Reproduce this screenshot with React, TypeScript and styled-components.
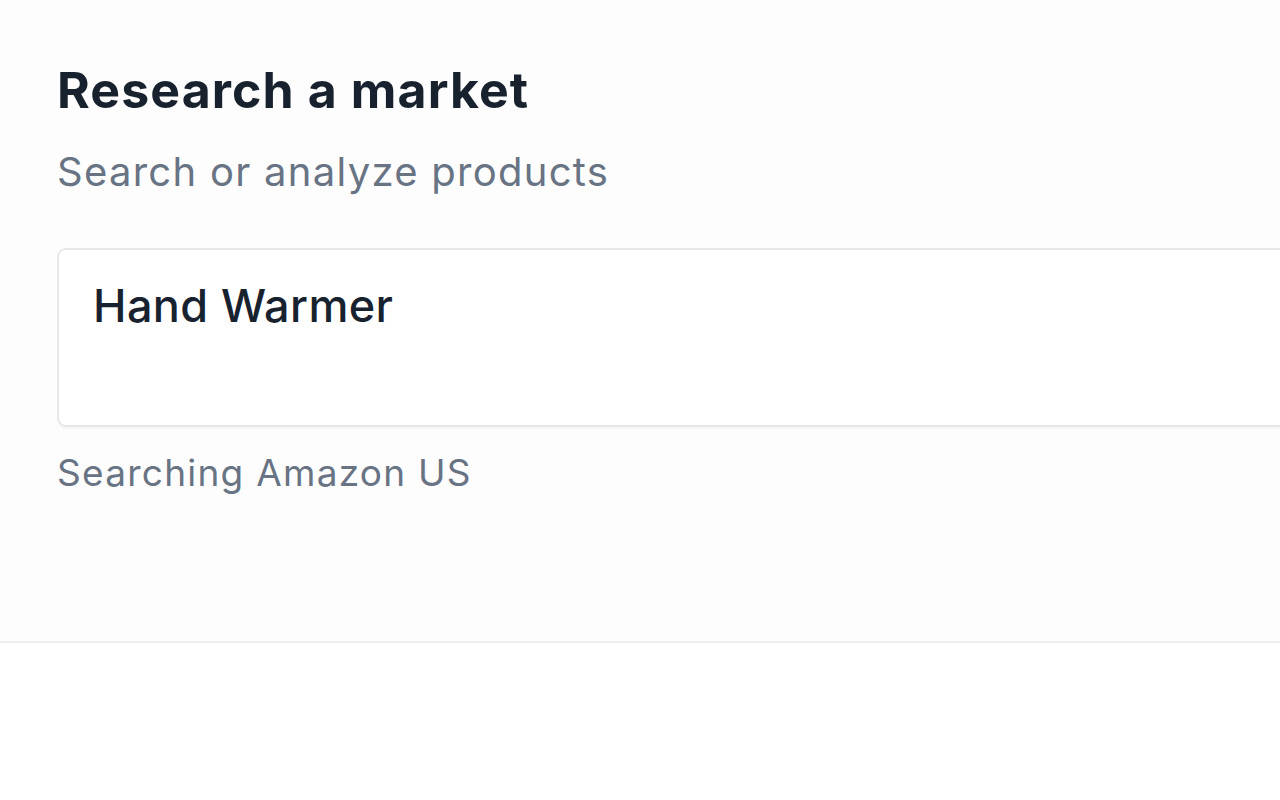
import styled, { createGlobalStyle } from "styled-components";

const GlobalStyle = createGlobalStyle`
  html, body {
    margin: 0;
    padding: 0;
    background: #ffffff;
  }
  body {
    font-family: Inter, "Noto Sans", "Liberation Sans", sans-serif;
    -webkit-font-smoothing: antialiased;
  }
`;

const Page = styled("div")`
  width: 1280px;
  height: 800px;
  overflow: hidden;
  display: flex;
  flex-direction: column;
  background: #ffffff;
`;

const Panel = styled("section")`
  display: flex;
  flex-direction: column;
  padding: 58px 0 0 57px;
  height: 643px;
  box-sizing: border-box;
  background: #fdfdfd;
  border-bottom: 2px solid #efefef;
`;

const Title = styled("h1")`
  margin: 0;
  font-size: 50px;
  line-height: 64px;
  font-weight: 700;
  color: #18222f;
  letter-spacing: 1.1px;
`;

const Subtitle = styled("p")`
  margin: 24px 0 0;
  font-size: 40px;
  line-height: 52px;
  font-weight: 400;
  color: #687384;
  letter-spacing: 1.28px;
`;

const SearchBox = styled("div")`
  margin-top: 50px;
  width: 1300px;
  height: 179px;
  box-sizing: border-box;
  border: 2px solid #e6e7ea;
  border-radius: 9px;
  background: #ffffff;
  padding: 26px 34px;
  box-shadow: 0 3px 2px -1px rgba(0, 0, 0, 0.03);
`;

const Query = styled("div")`
  font-size: 45px;
  line-height: 60px;
  font-weight: 500;
  color: #18222f;
  letter-spacing: 0.4px;
`;

const Hint = styled("p")`
  margin: 22px 0 0;
  font-size: 37px;
  line-height: 48px;
  color: #687384;
  letter-spacing: 1.25px;
`;

export default function App() {
  return (
    <>
      <GlobalStyle />
      <Page>
        <Panel>
          <Title>Research a market</Title>
          <Subtitle>Search or analyze products</Subtitle>
          <SearchBox>
            <Query>Hand Warmer</Query>
          </SearchBox>
          <Hint>Searching Amazon US</Hint>
        </Panel>
      </Page>
    </>
  );
}
